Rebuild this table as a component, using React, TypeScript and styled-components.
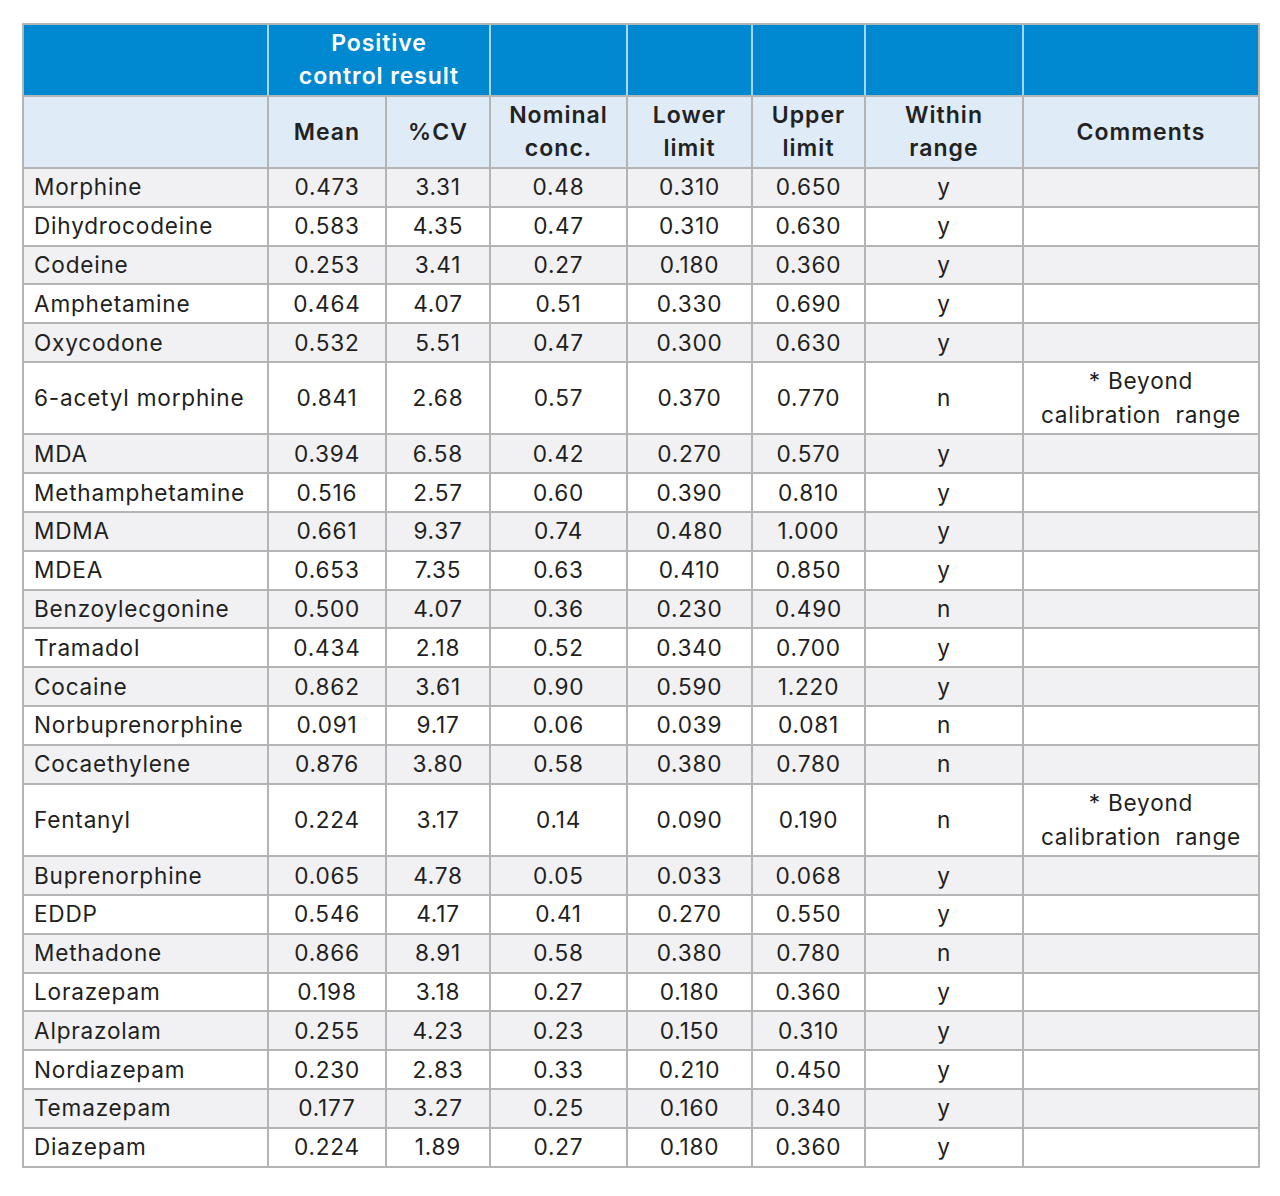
import React from "react";
import styled, { createGlobalStyle } from "styled-components";

const GlobalStyle = createGlobalStyle`
  html, body { margin: 0; padding: 0; background: #ffffff; }
  body { font-family: Inter, "Noto Sans", sans-serif; color: #1f1f1f; }
`;

const Page = styled.div`
  padding: 23px 22px 29px 22px;
  width: 1236px;
`;

const Table = styled.table`
  width: 1236px;
  table-layout: fixed;
  border-collapse: collapse;
  font-family: Inter, "Noto Sans", sans-serif;
  font-size: 22.6px;
  letter-spacing: 0.035em;
  border: 2px solid #b4b4b4;
`;

const TopRow = styled.tr`
  height: 72px;
  background: #0088d1;
`;

const TopCell = styled.th`
  border-left: 2px solid #a9d6f0;
  border-bottom: 2px solid #b4b4b4;
  border-top: 2px solid #b4b4b4;
  color: #ffffff;
  font-size: 23px;
  font-weight: 600;
  line-height: 33px;
  text-align: center;
  padding: 0 4px;
  letter-spacing: 0.04em;
  &:first-child { border-left: 2px solid #b4b4b4; }
`;

const SubRow = styled.tr`
  height: 72px;
  background: #dfebf7;
`;

const SubCell = styled.th`
  border: 2px solid #b4b4b4;
  color: #222222;
  font-size: 23px;
  font-weight: 600;
  line-height: 33px;
  text-align: center;
  padding: 0 4px;
  letter-spacing: 0.045em;
`;

const BodyRow = styled.tr<{ $shade: boolean; $tall: boolean }>`
  height: ${(p) => (p.$tall ? "72.5px" : "38.8px")};
  background: ${(p) => (p.$shade ? "#f1f1f3" : "#ffffff")};
`;

const Cell = styled.td<{ $left?: boolean }>`
  border: 2px solid #b4b4b4;
  padding: 0 4px;
  padding-left: ${(p) => (p.$left ? "10px" : "4px")};
  text-align: ${(p) => (p.$left ? "left" : "center")};
  line-height: 34px;
  color: #1f1f1f;
  white-space: nowrap;
`;

const Comment = styled.span`
  display: block;
  white-space: pre;
  line-height: 34px;
`;

type Row = [string, string, string, string, string, string, string, boolean?];

const rows: Row[] = [
  ["Morphine", "0.473", "3.31", "0.48", "0.310", "0.650", "y"],
  ["Dihydrocodeine", "0.583", "4.35", "0.47", "0.310", "0.630", "y"],
  ["Codeine", "0.253", "3.41", "0.27", "0.180", "0.360", "y"],
  ["Amphetamine", "0.464", "4.07", "0.51", "0.330", "0.690", "y"],
  ["Oxycodone", "0.532", "5.51", "0.47", "0.300", "0.630", "y"],
  ["6-acetyl morphine", "0.841", "2.68", "0.57", "0.370", "0.770", "n", true],
  ["MDA", "0.394", "6.58", "0.42", "0.270", "0.570", "y"],
  ["Methamphetamine", "0.516", "2.57", "0.60", "0.390", "0.810", "y"],
  ["MDMA", "0.661", "9.37", "0.74", "0.480", "1.000", "y"],
  ["MDEA", "0.653", "7.35", "0.63", "0.410", "0.850", "y"],
  ["Benzoylecgonine", "0.500", "4.07", "0.36", "0.230", "0.490", "n"],
  ["Tramadol", "0.434", "2.18", "0.52", "0.340", "0.700", "y"],
  ["Cocaine", "0.862", "3.61", "0.90", "0.590", "1.220", "y"],
  ["Norbuprenorphine", "0.091", "9.17", "0.06", "0.039", "0.081", "n"],
  ["Cocaethylene", "0.876", "3.80", "0.58", "0.380", "0.780", "n"],
  ["Fentanyl", "0.224", "3.17", "0.14", "0.090", "0.190", "n", true],
  ["Buprenorphine", "0.065", "4.78", "0.05", "0.033", "0.068", "y"],
  ["EDDP", "0.546", "4.17", "0.41", "0.270", "0.550", "y"],
  ["Methadone", "0.866", "8.91", "0.58", "0.380", "0.780", "n"],
  ["Lorazepam", "0.198", "3.18", "0.27", "0.180", "0.360", "y"],
  ["Alprazolam", "0.255", "4.23", "0.23", "0.150", "0.310", "y"],
  ["Nordiazepam", "0.230", "2.83", "0.33", "0.210", "0.450", "y"],
  ["Temazepam", "0.177", "3.27", "0.25", "0.160", "0.340", "y"],
  ["Diazepam", "0.224", "1.89", "0.27", "0.180", "0.360", "y"],
];

const widths = [245, 118, 104, 137, 125, 113, 158, 236];

export default function App() {
  return (
    <Page>
      <GlobalStyle />
      <Table>
        <colgroup>
          {widths.map((w, i) => (
            <col key={i} style={{ width: w }} />
          ))}
        </colgroup>
        <thead>
          <TopRow>
            <TopCell />
            <TopCell colSpan={2}>
              Positive
              <br />
              control result
            </TopCell>
            <TopCell />
            <TopCell />
            <TopCell />
            <TopCell />
            <TopCell />
          </TopRow>
          <SubRow>
            <SubCell />
            <SubCell>Mean</SubCell>
            <SubCell>%CV</SubCell>
            <SubCell>
              Nominal
              <br />
              conc.
            </SubCell>
            <SubCell>
              Lower
              <br />
              limit
            </SubCell>
            <SubCell>
              Upper
              <br />
              limit
            </SubCell>
            <SubCell>
              Within
              <br />
              range
            </SubCell>
            <SubCell>Comments</SubCell>
          </SubRow>
        </thead>
        <tbody>
          {rows.map((r, i) => (
            <BodyRow key={r[0]} $shade={i % 2 === 0} $tall={!!r[7]}>
              <Cell $left>{r[0]}</Cell>
              <Cell>{r[1]}</Cell>
              <Cell>{r[2]}</Cell>
              <Cell>{r[3]}</Cell>
              <Cell>{r[4]}</Cell>
              <Cell>{r[5]}</Cell>
              <Cell>{r[6]}</Cell>
              <Cell>
                {r[7] ? (
                  <>
                    <Comment>* Beyond</Comment>
                    <Comment>calibration  range</Comment>
                  </>
                ) : null}
              </Cell>
            </BodyRow>
          ))}
        </tbody>
      </Table>
    </Page>
  );
}
